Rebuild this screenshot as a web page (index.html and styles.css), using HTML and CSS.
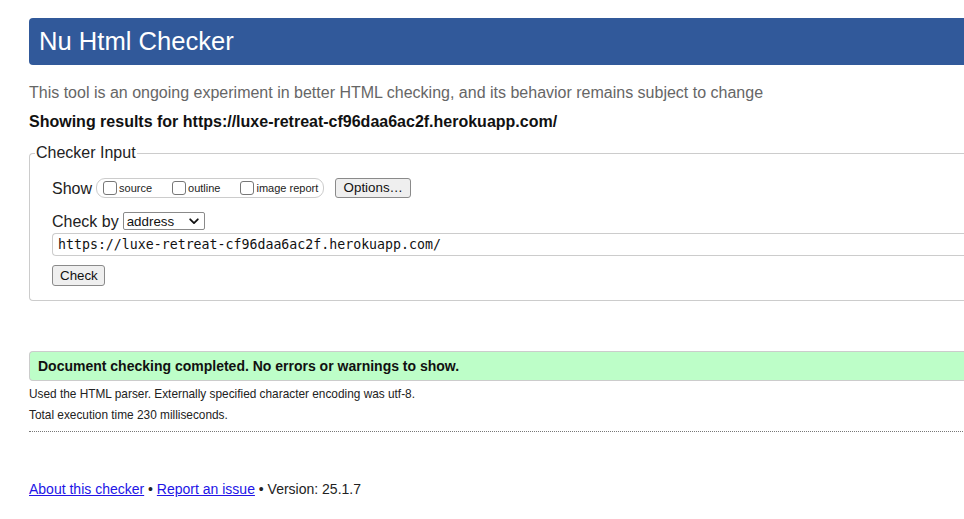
FILE: index.html
```html
<!DOCTYPE html>
<html lang="en">
<head>
<meta charset="utf-8">
<title>Showing results for https://luxe-retreat-cf96daa6ac2f.herokuapp.com/ - Nu Html Checker</title>
<link rel="stylesheet" href="styles.css">
</head>
<body>
<div class="page">
  <h1 class="title">Nu Html Checker</h1>
  <p class="intro">This tool is an ongoing experiment in better HTML checking, and its behavior remains subject to change</p>
  <p class="showing">Showing results for https://luxe-retreat-cf96daa6ac2f.herokuapp.com/</p>

  <fieldset class="checker">
    <legend class="legend">Checker Input</legend>
    <div class="row row-show">
      <span class="label">Show</span>
      <span class="opts">
        <label class="opt"><span class="cb"></span>source</label>
        <label class="opt"><span class="cb"></span>outline</label>
        <label class="opt"><span class="cb"></span>image report</label>
      </span>
      <button class="btn btn-options" type="button">Options…</button>
    </div>
    <div class="row row-by">
      <span class="label">Check by</span>
      <span class="select">address
        <svg class="chev" width="10" height="7" viewBox="0 0 10 7"><path d="M1.2 1.3 L5 5.1 L8.8 1.3" fill="none" stroke="#111" stroke-width="1.8" stroke-linecap="round" stroke-linejoin="round"/></svg>
      </span>
    </div>
    <div class="url">https://luxe-retreat-cf96daa6ac2f.herokuapp.com/</div>
    <button class="btn btn-check" type="button">Check</button>
  </fieldset>

  <p class="success">Document checking completed. No errors or warnings to show.</p>
  <p class="details">Used the HTML parser. Externally specified character encoding was utf-8.</p>
  <p class="details">Total execution time 230 milliseconds.</p>
  <hr class="sep">

  <p class="footer"><a href="#">About this checker</a> • <a href="#">Report an issue</a> • Version: 25.1.7</p>
</div>
</body>
</html>
```

FILE: styles.css
```css
html {
  overflow: hidden;
}
body {
  margin: 0;
  background: #fff;
  font-family: "Liberation Sans", Arial, Helvetica, sans-serif;
  color: #222;
}
.page {
  width: 1000px;
  padding: 18px 0 0 29px;
}
.title {
  margin: 0;
  height: 47px;
  line-height: 47px;
  padding-left: 10px;
  background: #31599a;
  color: #fff;
  font-size: 25.6px;
  font-weight: normal;
  border-radius: 4px 0 0 4px;
}
.intro {
  margin: 18px 0 0;
  font-size: 16px;
  line-height: 19px;
  color: #666;
}
.showing {
  margin: 10px 0 0;
  font-size: 16px;
  line-height: 19px;
  font-weight: bold;
  color: #111;
}
.checker {
  margin: 12px 0 0;
  padding: 15px 0 14px 22px;
  border: 1px solid #ccc;
  border-right: none;
  border-radius: 4px 0 0 4px;
  min-width: 0;
}
.legend {
  font-size: 16px;
  line-height: 20px;
  padding: 0 1px;
  margin-left: -17px;
  color: #222;
}
.row {
  display: flex;
  align-items: center;
}
.label {
  font-size: 16px;
  line-height: 19px;
  color: #222;
}
.row-show {
  height: 20px;
  margin-bottom: 14px;
}
.opts {
  display: inline-flex;
  align-items: center;
  height: 18px;
  margin-left: 4px;
  padding: 0 5px 0 6px;
  border: 1px solid #ccc;
  border-radius: 9px;
  gap: 20px;
}
.opt {
  display: inline-flex;
  align-items: center;
  font-size: 11px;
  color: #222;
}
.cb {
  width: 12px;
  height: 12px;
  border: 1px solid #777;
  border-radius: 3px;
  margin-right: 2px;
  background: #fff;
}
.btn {
  font-family: "Liberation Sans", Arial, sans-serif;
  font-size: 13.33px;
  color: #111;
  background: #efefef;
  border: 1px solid #8a8a8a;
  border-radius: 3px;
  padding: 0 7px;
  height: 20px;
  line-height: 18px;
}
.btn-options {
  margin-left: 11px;
  width: 76px;
}
.row-by {
  height: 18px;
  margin-bottom: 3px;
}
.select {
  display: inline-flex;
  align-items: center;
  justify-content: space-between;
  box-sizing: border-box;
  width: 82px;
  height: 18px;
  margin-left: 4px;
  padding: 0 5px 0 3px;
  border: 1px solid #8a8a8a;
  border-radius: 2px;
  font-size: 13.33px;
  color: #111;
}
.url {
  box-sizing: border-box;
  height: 23px;
  line-height: 21px;
  padding-left: 5px;
  border: 1px solid #ccc;
  border-right: none;
  border-radius: 4px 0 0 4px;
  font-family: "DejaVu Sans Mono", "Liberation Mono", monospace;
  font-size: 13.25px;
  color: #111;
  margin-bottom: 9px;
}
.btn-check {
  width: 53px;
  height: 21px;
  display: block;
}
.success {
  margin: 50px 0 0;
  box-sizing: border-box;
  height: 30px;
  line-height: 28px;
  padding-left: 8px;
  background: #bdfec8;
  border: 1px solid #ccc;
  border-right: none;
  border-radius: 4px 0 0 4px;
  font-size: 14px;
  font-weight: bold;
  color: #111;
}
.details {
  margin: 6px 0 0;
  font-size: 11.85px;
  line-height: 15px;
  color: #222;
}
.details + .details {
  margin-top: 6px;
}
.sep {
  margin: 8px 0 0;
  border: none;
  border-top: 1px dotted #777;
  height: 0;
}
.footer {
  margin: 49px 0 0;
  font-size: 14px;
  line-height: 17px;
  color: #222;
}
.footer a {
  color: #2214e6;
}
```
